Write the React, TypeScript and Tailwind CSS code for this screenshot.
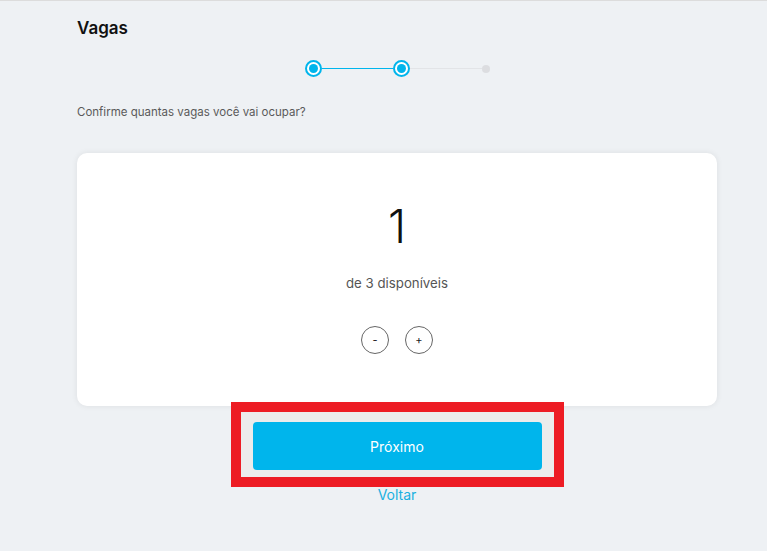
export default function App() {
  return (
    <div className="min-h-[551px] w-full bg-[#eef1f4] border-t border-[#dcdcdc] font-['Inter',sans-serif]">
      <div className="ml-[77px] w-[640px] pt-[15px]">
        <h1 className="text-[17px] font-semibold text-[#111] leading-[24px]">Vagas</h1>

        <div className="mt-[20px] flex items-center pl-[228px]">
          <span className="flex h-[17px] w-[17px] items-center justify-center rounded-full border-2 border-[#00b5ec] bg-white">
            <span className="h-[9px] w-[9px] rounded-full bg-[#00b5ec]" />
          </span>
          <span className="block h-[1px] w-[71px] bg-[#00b5ec]" />
          <span className="flex h-[17px] w-[17px] items-center justify-center rounded-full border-2 border-[#00b5ec] bg-white">
            <span className="h-[9px] w-[9px] rounded-full bg-[#00b5ec]" />
          </span>
          <span className="block h-[1px] w-[72px] bg-[#e2e4e7]" />
          <span className="h-[8px] w-[8px] rounded-full bg-[#dcdde0]" />
        </div>

        <p className="mt-[28px] text-[11.5px] text-[#5a5a5a] leading-[14px]">
          Confirme quantas vagas você vai ocupar?
        </p>

        <div className="mt-[34px] flex h-[253px] flex-col items-center rounded-[10px] bg-white shadow-[0_0_6px_rgba(0,0,0,0.08)]">
          <div className="mt-[45px] text-[46px] font-light leading-[56px] text-[#111]">1</div>
          <div className="mt-[20px] text-[13.25px] text-[#555] leading-[18px]">de 3 disponíveis</div>
          <div className="mt-[34px] flex gap-[16px]">
            <button className="flex h-[28px] w-[28px] items-center justify-center rounded-full border border-[#666] text-[11px] text-[#222]">
              -
            </button>
            <button className="flex h-[28px] w-[28px] items-center justify-center rounded-full border border-[#666] text-[11px] text-[#222]">
              +
            </button>
          </div>
        </div>

        <div className="flex flex-col items-center">
          <div className="-mt-[4px] border-[10px] border-[#ed1c24] bg-[#ececec] px-[12px] pt-[10px] pb-[7px]">
            <button className="block h-[48px] w-[289px] rounded-[4px] bg-[#00b5ec] text-[14px] text-white">
              Próximo
            </button>
          </div>
          <a className="-mt-[1px] text-[14px] leading-[18px] text-[#1ab0e0]">Voltar</a>
        </div>
      </div>
    </div>
  );
}
